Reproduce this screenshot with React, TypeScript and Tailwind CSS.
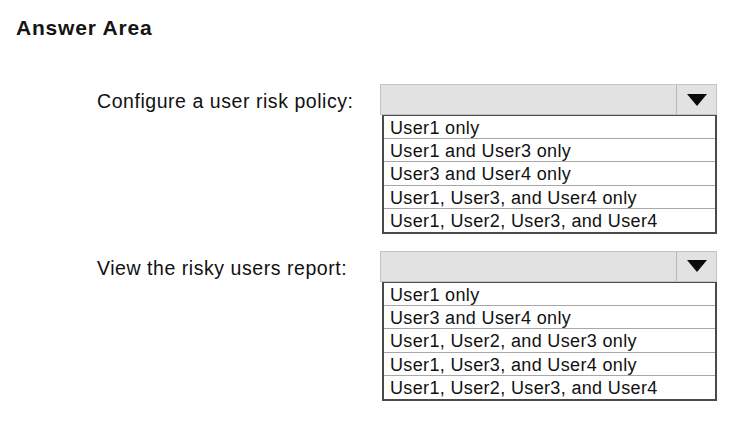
import React from 'react';

const questions = [
  {
    label: 'Configure a user risk policy:',
    options: [
      'User1 only',
      'User1 and User3 only',
      'User3 and User4 only',
      'User1, User3, and User4 only',
      'User1, User2, User3, and User4',
    ],
  },
  {
    label: 'View the risky users report:',
    options: [
      'User1 only',
      'User3 and User4 only',
      'User1, User2, and User3 only',
      'User1, User3, and User4 only',
      'User1, User2, User3, and User4',
    ],
  },
];

const Arrow = () => (
  <svg width="20" height="12" viewBox="0 0 20 12">
    <polygon points="0,0 20,0 10,12" fill="#0a0a0a" />
  </svg>
);

const Dropdown = ({ options }: { options: string[] }) => (
  <div className="flex flex-col">
    {/* closed select bar */}
    <div className="flex h-[31px] w-[337px] border border-[#c4c4c4] bg-[#e2e2e2]">
      <div className="flex-1" />
      <div className="flex w-[40px] items-center justify-center border-l border-[#b8b8b8]">
        <Arrow />
      </div>
    </div>
    {/* open option list */}
    <div className="ml-[2px] w-[335px] border-x-2 border-b-2 border-t border-[#4a4a4a] bg-white">
      {options.map((opt, i) => (
        <div
          key={opt}
          className={`flex h-[23.2px] items-center pl-[6px] pt-[2px] text-[18px] leading-none tracking-[0.35px] text-[#111] ${
            i < options.length - 1 ? 'border-b border-[#a8a8a8]' : ''
          }`}
        >
          {opt}
        </div>
      ))}
    </div>
  </div>
);

export default function App() {
  return (
    <div
      className="h-[421px] w-[739px] bg-white text-[#111]"
      style={{ fontFamily: '"Liberation Sans", Arial, sans-serif' }}
    >
      <h1 className="pl-[16px] pt-[17px] text-[21px] font-bold leading-none tracking-[0.8px] text-[#141414]">
        Answer Area
      </h1>

      <div className="mt-[46px] flex flex-col gap-[17px]">
        {questions.map((q) => (
          <div key={q.label} className="flex">
            <div className="flex h-[31px] w-[380px] items-center pl-[97px] pt-[4px] text-[19.5px] leading-none tracking-[0.55px]">
              {q.label}
            </div>
            <Dropdown options={q.options} />
          </div>
        ))}
      </div>
    </div>
  );
}
